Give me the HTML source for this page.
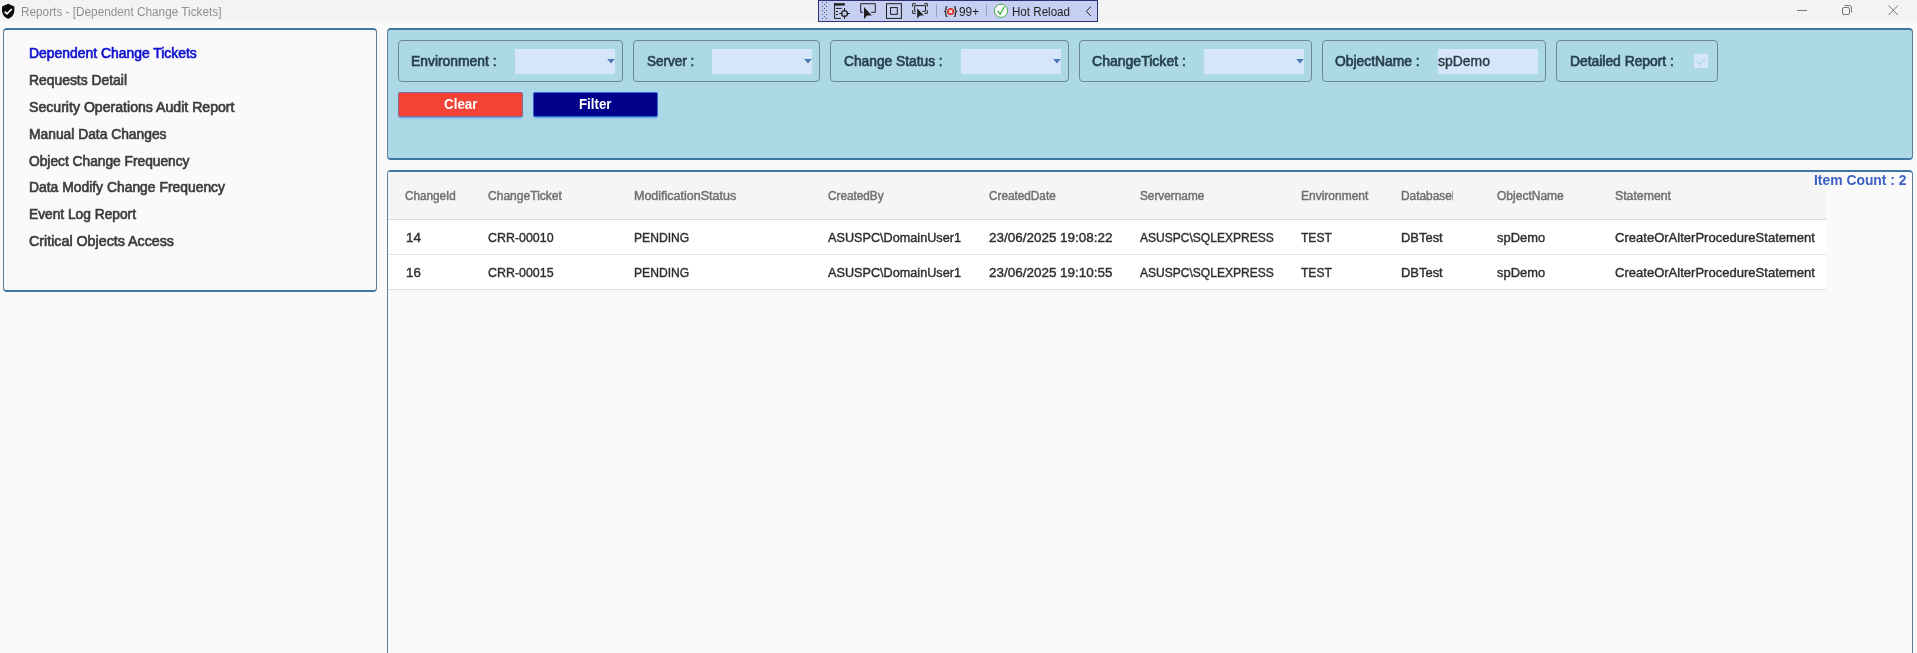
<!DOCTYPE html>
<html lang="en">
<head>
<meta charset="utf-8">
<title>Reports - [Dependent Change Tickets]</title>
<style>
html,body{margin:0;padding:0;}
body{width:1917px;height:653px;overflow:hidden;background:#fafafa;position:relative;font-family:"Liberation Sans",sans-serif;}
.a{position:absolute;box-sizing:border-box;}
.t{position:absolute;white-space:pre;transform-origin:0 0;font-family:"Liberation Sans",sans-serif;}
.panel{position:absolute;box-sizing:border-box;border-style:solid;border-color:#3f77a6 #577c9e;border-width:2px 1px;border-radius:4px;}
.fs{position:absolute;box-sizing:border-box;top:40px;height:42px;border:1px solid #6c8797;border-radius:4px;}
.cb{position:absolute;box-sizing:border-box;top:49px;height:24.6px;width:100px;background:#d5e6fb;}
.cb svg{position:absolute;right:0;top:10px;}
.btn{position:absolute;box-sizing:border-box;top:93px;height:23px;width:123px;border-radius:1px;}
.hl{position:absolute;left:388px;width:1438px;height:1px;}
</style>
</head>
<body>
<!-- title bar -->
<div class="a" style="left:0;top:0;width:1917px;height:20px;background:#f3f3f3"></div>
<div class="a" style="left:0;top:20px;width:1917px;height:4px;background:linear-gradient(#f3f3f3,#fafafa)"></div>
<svg class="a" style="left:-0.5px;top:3px" width="16.4" height="16.4" viewBox="0 0 24 24"><path fill="#0a0a0a" d="M12 1L3 5v6c0 5.55 3.84 10.74 9 12 5.16-1.26 9-6.45 9-12V5l-9-4z"/><path fill="none" stroke="#fff" stroke-width="2.4" d="M6.8 12.6l3.4 3.4 7-7.2"/></svg>

<!-- VS toolbar -->
<div class="a" style="left:818px;top:0;width:280px;height:22px;background:#c6cff1;border:1px solid #2c3272"></div>
<svg class="a" style="left:818px;top:0" width="280" height="22" viewBox="818 0 280 22">
  <!-- grip -->
  <g fill="#4a4f7a">
    <rect x="822" y="2" width="1" height="1"/><rect x="822" y="6" width="1" height="1"/><rect x="822" y="10" width="1" height="1"/><rect x="822" y="14" width="1" height="1"/><rect x="822" y="18" width="1" height="1"/>
    <rect x="824" y="4" width="1" height="1"/><rect x="824" y="8" width="1" height="1"/><rect x="824" y="12" width="1" height="1"/><rect x="824" y="16" width="1" height="1"/>
    <rect x="826" y="2" width="1" height="1"/><rect x="826" y="6" width="1" height="1"/><rect x="826" y="10" width="1" height="1"/><rect x="826" y="14" width="1" height="1"/><rect x="826" y="18" width="1" height="1"/>
  </g>
  <!-- icon1 -->
  <g stroke="#1e1e1e" fill="none" stroke-width="1">
    <rect x="834" y="3.200" width="10.800" height="2.400" fill="#1e1e1e" stroke="none"/>
    <path d="M834.600 3.200v15.200h6.200"/>
    <path d="M836 8.400h5.800M836 11.500h2M836 14.500h2"/>
    <circle cx="844.500" cy="13.500" r="2.900" stroke-width="1.300"/>
    <path d="M844.500 8v3.500M844.500 15.500v3.400M839.100 13.500h3.400M846.500 13.500h3.400"/>
  </g>
  <!-- icon2 -->
  <g stroke="#1e1e1e" fill="none" stroke-width="1">
    <path d="M862.900 12.300h-2.200v-8.600h14.600v8.600h-4.200"/>
    <path d="M864 7l7.800 8.400h-4.600l-3.200 3.500z" fill="#1e1e1e" stroke="none"/>
  </g>
  <!-- icon3 -->
  <g stroke="#1e1e1e" fill="none" stroke-width="1">
    <rect x="886.500" y="3.700" width="14.900" height="14.700"/>
    <rect x="890.600" y="7.600" width="6.700" height="6.700"/>
  </g>
  <!-- icon4 -->
  <g stroke="#1e1e1e" fill="none" stroke-width="1">
    <path d="M912.700 6.700V3.700H915.700M924.300 3.700H927.300V6.700M912.700 10.100V13.400H915.700M927.300 10.100V13.400H924.300"/>
    <path d="M915.700 11.300H914.700V5.600H925.500V11.300H922.300"/>
    <path d="M917.200 8.300l6.600 7.100h-4l-2.600 3.400z" fill="#1e1e1e" stroke="none"/>
  </g>
  <path d="M936.500 4v13" stroke="#9aa0c4" stroke-width="1"/>
  <!-- {x} -->
  <g transform="translate(1.4,1)">
    <path d="M946 5.500c-1.300 0-1.500 0.700-1.500 1.600v1.700c0 0.900-0.500 1.400-1.100 1.700c0.600 0.300 1.100 0.800 1.100 1.700v1.700c0 0.900 0.200 1.600 1.500 1.600" stroke="#1e1e1e" stroke-width="1.200" fill="none"/>
    <path d="M952.500 5.500c1.300 0 1.500 0.700 1.500 1.600v1.700c0 0.900 0.500 1.400 1.100 1.700c-0.600 0.300-1.100 0.800-1.100 1.700v1.700c0 0.900-0.200 1.600-1.500 1.600" stroke="#1e1e1e" stroke-width="1.200" fill="none"/>
    <circle cx="949.300" cy="10.500" r="3.600" fill="#d9281e"/>
    <path d="M947.700 8.900l3.200 3.200M950.900 8.900l-3.200 3.200" stroke="#fff" stroke-width="1.300"/>
  </g>
  <path d="M986.500 4v13" stroke="#9aa0c4" stroke-width="1"/>
  <!-- hot reload check -->
  <circle cx="1001" cy="10.800" r="6.600" fill="#fdfffd" stroke="#49ad4e" stroke-width="1"/>
  <path d="M997.600 10.800l2.600 3.400 4.100-7.400" stroke="#35a33e" stroke-width="1.200" fill="none"/>
  <!-- chevron -->
  <path d="M1091 6.600l-4.800 4.700 4.800 4.700" stroke="#1e1e1e" stroke-width="1" fill="none"/>
</svg>

<!-- window controls -->
<svg class="a" style="left:1790px;top:0" width="120" height="22" viewBox="1790 0 120 22" fill="none" stroke="#777" stroke-width="1">
  <path d="M1797 10.500h10"/>
  <rect x="1842.500" y="7.500" width="7" height="7" rx="1.500"/>
  <path d="M1844.500 5.500h4.500a2.500 2.500 0 0 1 2.500 2.500v4.500"/>
  <path d="M1888.500 5.500l9.500 9.500M1898 5.500l-9.500 9.500"/>
</svg>

<!-- left panel -->
<div class="panel" style="left:3px;top:28px;width:374px;height:263.5px;background:#fafafa"></div>

<!-- filter panel -->
<div class="panel" style="left:387px;top:28px;width:1526px;height:132px;background:#add8e6"></div>
<div class="fs" style="left:398px;width:225px"></div>
<div class="fs" style="left:633px;width:187px"></div>
<div class="fs" style="left:830px;width:239px"></div>
<div class="fs" style="left:1079px;width:233px"></div>
<div class="fs" style="left:1322px;width:224px"></div>
<div class="fs" style="left:1556px;width:162px"></div>
<div class="cb" style="left:515px"><svg width="8" height="5" viewBox="0 0 8 5"><path d="M0.200 0h7.600l-3.800 4.400z" fill="#4a78b0"/></svg></div>
<div class="cb" style="left:712px"><svg width="8" height="5" viewBox="0 0 8 5"><path d="M0.200 0h7.600l-3.800 4.400z" fill="#4a78b0"/></svg></div>
<div class="cb" style="left:961px"><svg width="8" height="5" viewBox="0 0 8 5"><path d="M0.200 0h7.600l-3.800 4.400z" fill="#4a78b0"/></svg></div>
<div class="cb" style="left:1204px"><svg width="8" height="5" viewBox="0 0 8 5"><path d="M0.200 0h7.600l-3.800 4.400z" fill="#4a78b0"/></svg></div>
<div class="cb" style="left:1438px"></div>
<!-- checkbox -->
<div class="a" style="left:1694px;top:54px;width:14px;height:14px;background:#d5e6fb;border-radius:1px"></div>
<svg class="a" style="left:1694px;top:54px" width="14" height="14" viewBox="0 0 14 14"><path d="M2.600 7.400l3 3 5.800-6.400" stroke="#b6d6ea" stroke-width="1.500" fill="none"/></svg>
<!-- buttons -->
<div class="btn" style="left:399px;background:#f44336;box-shadow:0 0 0 1px #7f6c9c,0 2px 2px 0 rgba(60,140,225,.75)"></div>
<div class="btn" style="left:534px;background:#00008b;box-shadow:0 0 0 1px #2e62d2,0 2px 2px 0 rgba(60,140,225,.75)"></div>

<!-- grid panel -->
<div class="panel" style="left:387px;top:170px;width:1526px;height:500px;background:#fafafa"></div>
<div class="a" style="left:388px;top:172px;width:1438px;height:47px;background:#f5f5f5"></div>
<div class="hl" style="top:219px;background:#dadada"></div>
<div class="a" style="left:388px;top:220px;width:1438px;height:34px;background:#fff"></div>
<div class="hl" style="top:254px;background:#e0e0e0"></div>
<div class="a" style="left:388px;top:255px;width:1438px;height:34px;background:#fff"></div>
<div class="hl" style="top:289px;background:#e0e0e0"></div>

<div style="position:absolute;left:0;top:0;width:1917px;height:653px;will-change:transform;">
<span class="t" style="left:21.3px;top:3.84px;font-size:12px;line-height:16px;color:#909090;font-weight:400;transform:scaleX(0.9822);">Reports - [Dependent Change Tickets]</span>
<span class="t" style="left:959.2px;top:4.04px;font-size:12px;line-height:16px;color:#1e1e1e;font-weight:400;transform:scaleX(0.9873);">99+</span>
<span class="t" style="left:1011.6px;top:4.04px;font-size:12px;line-height:16px;color:#1e1e1e;font-weight:400;transform:scaleX(0.9659);">Hot Reload</span>
<span class="t" style="left:29.2px;top:44.15px;font-size:14px;line-height:18px;color:#1010d0;font-weight:400;-webkit-text-stroke:0.65px #1010d0;transform:scaleX(0.9935);">Dependent Change Tickets</span>
<span class="t" style="left:29.2px;top:70.95px;font-size:14px;line-height:18px;color:#3c3c3c;font-weight:400;-webkit-text-stroke:0.65px #3c3c3c;transform:scaleX(0.9916);">Requests Detail</span>
<span class="t" style="left:29.2px;top:97.95px;font-size:14px;line-height:18px;color:#3c3c3c;font-weight:400;-webkit-text-stroke:0.65px #3c3c3c;transform:scaleX(1.0079);">Security Operations Audit Report</span>
<span class="t" style="left:29.2px;top:124.75px;font-size:14px;line-height:18px;color:#3c3c3c;font-weight:400;-webkit-text-stroke:0.65px #3c3c3c;transform:scaleX(0.9870);">Manual Data Changes</span>
<span class="t" style="left:29.2px;top:151.85px;font-size:14px;line-height:18px;color:#3c3c3c;font-weight:400;-webkit-text-stroke:0.65px #3c3c3c;transform:scaleX(0.9820);">Object Change Frequency</span>
<span class="t" style="left:29.2px;top:178.35px;font-size:14px;line-height:18px;color:#3c3c3c;font-weight:400;-webkit-text-stroke:0.65px #3c3c3c;transform:scaleX(0.9915);">Data Modify Change Frequency</span>
<span class="t" style="left:29.2px;top:204.95px;font-size:14px;line-height:18px;color:#3c3c3c;font-weight:400;-webkit-text-stroke:0.65px #3c3c3c;transform:scaleX(0.9819);">Event Log Report</span>
<span class="t" style="left:29.2px;top:231.85px;font-size:14px;line-height:18px;color:#3c3c3c;font-weight:400;-webkit-text-stroke:0.65px #3c3c3c;transform:scaleX(1.0184);">Critical Objects Access</span>
<span class="t" style="left:411.2px;top:52.15px;font-size:14px;line-height:18px;color:#27404c;font-weight:400;-webkit-text-stroke:0.65px #27404c;transform:scaleX(0.9899);">Environment :</span>
<span class="t" style="left:646.6px;top:52.15px;font-size:14px;line-height:18px;color:#27404c;font-weight:400;-webkit-text-stroke:0.65px #27404c;transform:scaleX(0.9630);">Server :</span>
<span class="t" style="left:843.5px;top:52.15px;font-size:14px;line-height:18px;color:#27404c;font-weight:400;-webkit-text-stroke:0.65px #27404c;transform:scaleX(0.9830);">Change Status :</span>
<span class="t" style="left:1091.7px;top:52.15px;font-size:14px;line-height:18px;color:#27404c;font-weight:400;-webkit-text-stroke:0.65px #27404c;transform:scaleX(1.0028);">ChangeTicket :</span>
<span class="t" style="left:1335.1px;top:52.15px;font-size:14px;line-height:18px;color:#27404c;font-weight:400;-webkit-text-stroke:0.65px #27404c;transform:scaleX(0.9896);">ObjectName :</span>
<span class="t" style="left:1569.6px;top:52.15px;font-size:14px;line-height:18px;color:#27404c;font-weight:400;-webkit-text-stroke:0.65px #27404c;transform:scaleX(0.9889);">Detailed Report :</span>
<span class="t" style="left:1438.4px;top:52.15px;font-size:14px;line-height:18px;color:#2b3a42;font-weight:400;-webkit-text-stroke:0.4px #2b3a42;transform:scaleX(0.9954);">spDemo</span>
<span class="t" style="left:443.8px;top:95.05px;font-size:14px;line-height:18px;color:#ffffff;font-weight:700;transform:scaleX(0.9563);">Clear</span>
<span class="t" style="left:579.3px;top:95.05px;font-size:14px;line-height:18px;color:#ffffff;font-weight:700;transform:scaleX(0.9493);">Filter</span>
<span class="t" style="left:1814.2px;top:171.15px;font-size:14px;line-height:18px;color:#3c5fc6;font-weight:700;transform:scaleX(0.9910);">Item Count : 2</span>
<span class="t" style="left:405.1px;top:188.04px;font-size:12px;line-height:16px;color:#6f6f6f;font-weight:400;-webkit-text-stroke:0.45px #6f6f6f;transform:scaleX(0.9780);">ChangeId</span>
<span class="t" style="left:488.1px;top:188.04px;font-size:12px;line-height:16px;color:#6f6f6f;font-weight:400;-webkit-text-stroke:0.45px #6f6f6f;transform:scaleX(1.0042);">ChangeTicket</span>
<span class="t" style="left:634.1px;top:188.04px;font-size:12px;line-height:16px;color:#6f6f6f;font-weight:400;-webkit-text-stroke:0.45px #6f6f6f;transform:scaleX(1.0422);">ModificationStatus</span>
<span class="t" style="left:828.3px;top:188.04px;font-size:12px;line-height:16px;color:#6f6f6f;font-weight:400;-webkit-text-stroke:0.45px #6f6f6f;transform:scaleX(0.9805);">CreatedBy</span>
<span class="t" style="left:989.3px;top:188.04px;font-size:12px;line-height:16px;color:#6f6f6f;font-weight:400;-webkit-text-stroke:0.45px #6f6f6f;transform:scaleX(0.9802);">CreatedDate</span>
<span class="t" style="left:1140.4px;top:188.04px;font-size:12px;line-height:16px;color:#6f6f6f;font-weight:400;-webkit-text-stroke:0.45px #6f6f6f;transform:scaleX(0.9836);">Servername</span>
<span class="t" style="left:1301.3px;top:188.04px;font-size:12px;line-height:16px;color:#6f6f6f;font-weight:400;-webkit-text-stroke:0.45px #6f6f6f;transform:scaleX(0.9989);">Environment</span>
<span class="t" style="left:1496.5px;top:188.04px;font-size:12px;line-height:16px;color:#6f6f6f;font-weight:400;-webkit-text-stroke:0.45px #6f6f6f;transform:scaleX(1.0015);">ObjectName</span>
<span class="t" style="left:1615.3px;top:188.04px;font-size:12px;line-height:16px;color:#6f6f6f;font-weight:400;-webkit-text-stroke:0.45px #6f6f6f;transform:scaleX(1.0237);">Statement</span>
<div class="t" style="left:1401.0px;top:188.04px;width:52.3px;height:16px;overflow:hidden"><span class="t" style="left:0;top:0;font-size:12px;line-height:16px;color:#6f6f6f;font-weight:400;-webkit-text-stroke:0.45px #6f6f6f;transform:scaleX(0.9893);">DatabaseName</span></div>
<span class="t" style="left:405.5px;top:229.00px;font-size:13px;line-height:17px;color:#2e2e2e;font-weight:400;-webkit-text-stroke:0.4px #2e2e2e;transform:scaleX(1.0229);">14</span>
<span class="t" style="left:488.1px;top:229.00px;font-size:13px;line-height:17px;color:#2e2e2e;font-weight:400;-webkit-text-stroke:0.4px #2e2e2e;transform:scaleX(0.9555);">CRR-00010</span>
<span class="t" style="left:634.1px;top:229.00px;font-size:13px;line-height:17px;color:#2e2e2e;font-weight:400;-webkit-text-stroke:0.4px #2e2e2e;transform:scaleX(0.9319);">PENDING</span>
<span class="t" style="left:828.3px;top:229.00px;font-size:13px;line-height:17px;color:#2e2e2e;font-weight:400;-webkit-text-stroke:0.4px #2e2e2e;transform:scaleX(0.9740);">ASUSPC\DomainUser1</span>
<span class="t" style="left:989.3px;top:229.00px;font-size:13px;line-height:17px;color:#2e2e2e;font-weight:400;-webkit-text-stroke:0.4px #2e2e2e;transform:scaleX(1.0354);">23/06/2025 19:08:22</span>
<span class="t" style="left:1140.4px;top:229.00px;font-size:13px;line-height:17px;color:#2e2e2e;font-weight:400;-webkit-text-stroke:0.4px #2e2e2e;transform:scaleX(0.9253);">ASUSPC\SQLEXPRESS</span>
<span class="t" style="left:1301.3px;top:229.00px;font-size:13px;line-height:17px;color:#2e2e2e;font-weight:400;-webkit-text-stroke:0.4px #2e2e2e;transform:scaleX(0.9268);">TEST</span>
<span class="t" style="left:1400.8px;top:229.00px;font-size:13px;line-height:17px;color:#2e2e2e;font-weight:400;-webkit-text-stroke:0.4px #2e2e2e;transform:scaleX(0.9951);">DBTest</span>
<span class="t" style="left:1496.5px;top:229.00px;font-size:13px;line-height:17px;color:#2e2e2e;font-weight:400;-webkit-text-stroke:0.4px #2e2e2e;transform:scaleX(0.9934);">spDemo</span>
<span class="t" style="left:1615.3px;top:229.00px;font-size:13px;line-height:17px;color:#2e2e2e;font-weight:400;-webkit-text-stroke:0.4px #2e2e2e;transform:scaleX(1.0028);">CreateOrAlterProcedureStatement</span>
<span class="t" style="left:405.5px;top:264.00px;font-size:13px;line-height:17px;color:#2e2e2e;font-weight:400;-webkit-text-stroke:0.4px #2e2e2e;transform:scaleX(1.0229);">16</span>
<span class="t" style="left:488.1px;top:264.00px;font-size:13px;line-height:17px;color:#2e2e2e;font-weight:400;-webkit-text-stroke:0.4px #2e2e2e;transform:scaleX(0.9555);">CRR-00015</span>
<span class="t" style="left:634.1px;top:264.00px;font-size:13px;line-height:17px;color:#2e2e2e;font-weight:400;-webkit-text-stroke:0.4px #2e2e2e;transform:scaleX(0.9319);">PENDING</span>
<span class="t" style="left:828.3px;top:264.00px;font-size:13px;line-height:17px;color:#2e2e2e;font-weight:400;-webkit-text-stroke:0.4px #2e2e2e;transform:scaleX(0.9740);">ASUSPC\DomainUser1</span>
<span class="t" style="left:989.3px;top:264.00px;font-size:13px;line-height:17px;color:#2e2e2e;font-weight:400;-webkit-text-stroke:0.4px #2e2e2e;transform:scaleX(1.0354);">23/06/2025 19:10:55</span>
<span class="t" style="left:1140.4px;top:264.00px;font-size:13px;line-height:17px;color:#2e2e2e;font-weight:400;-webkit-text-stroke:0.4px #2e2e2e;transform:scaleX(0.9253);">ASUSPC\SQLEXPRESS</span>
<span class="t" style="left:1301.3px;top:264.00px;font-size:13px;line-height:17px;color:#2e2e2e;font-weight:400;-webkit-text-stroke:0.4px #2e2e2e;transform:scaleX(0.9268);">TEST</span>
<span class="t" style="left:1400.8px;top:264.00px;font-size:13px;line-height:17px;color:#2e2e2e;font-weight:400;-webkit-text-stroke:0.4px #2e2e2e;transform:scaleX(0.9951);">DBTest</span>
<span class="t" style="left:1496.5px;top:264.00px;font-size:13px;line-height:17px;color:#2e2e2e;font-weight:400;-webkit-text-stroke:0.4px #2e2e2e;transform:scaleX(0.9934);">spDemo</span>
<span class="t" style="left:1615.3px;top:264.00px;font-size:13px;line-height:17px;color:#2e2e2e;font-weight:400;-webkit-text-stroke:0.4px #2e2e2e;transform:scaleX(1.0028);">CreateOrAlterProcedureStatement</span>
</div>
</body>
</html>
